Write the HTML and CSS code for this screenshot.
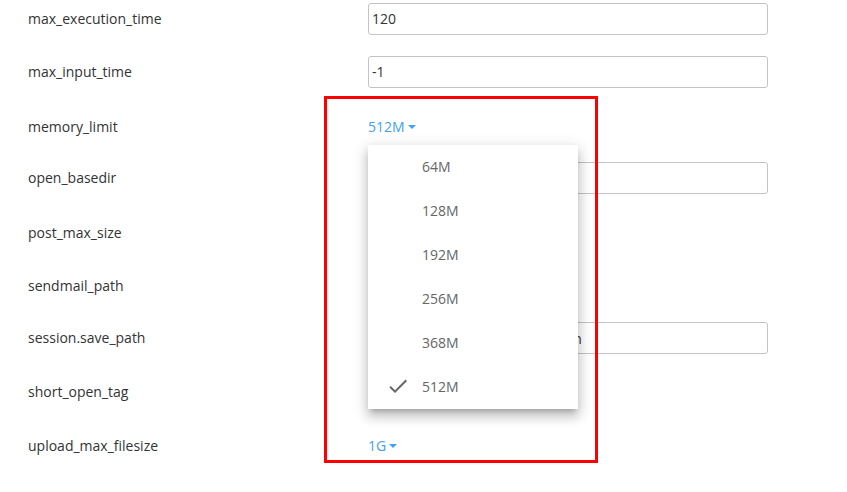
FILE: index.html
```html
<!DOCTYPE html>
<html lang="en">
  <head>
    <meta charset="UTF-8" />
    <title>PHP settings</title>
    <link rel="stylesheet" href="styles.css">
  </head>
  <body>
    <div class="settings">
      <div class="row">
        <label class="label">max_execution_time</label>
        <div class="value"><input class="text-input" type="text" value="120" /></div>
      </div>
      <div class="row">
        <label class="label">max_input_time</label>
        <div class="value"><input class="text-input" type="text" value="-1" /></div>
      </div>
      <div class="row row-select row-open">
        <label class="label">memory_limit</label>
        <div class="value">
          <span class="dropdown open">
            512M<span class="caret"></span>
            <ul class="menu">
              <li class="menu-item">64M</li>
              <li class="menu-item">128M</li>
              <li class="menu-item">192M</li>
              <li class="menu-item">256M</li>
              <li class="menu-item">368M</li>
              <li class="menu-item selected">
                <svg class="check" width="24" height="24" viewBox="0 0 24 24">
                  <path d="M9 16.17L4.83 12l-1.42 1.41L9 19 21 7l-1.41-1.41z" fill="#666666"></path>
                </svg>
                512M
              </li>
            </ul>
          </span>
        </div>
      </div>
      <div class="row">
        <label class="label">open_basedir</label>
        <div class="value"><input class="text-input" type="text" value="" /></div>
      </div>
      <div class="row row-select">
        <label class="label">post_max_size</label>
        <div class="value"><span class="dropdown">512M<span class="caret"></span></span></div>
      </div>
      <div class="row row-select">
        <label class="label">sendmail_path</label>
        <div class="value"><span class="dropdown">On<span class="caret"></span></span></div>
      </div>
      <div class="row">
        <label class="label">session.save_path</label>
        <div class="value"><input class="text-input" type="text" value="/www/server/php/82/lib/session" /></div>
      </div>
      <div class="row row-select">
        <label class="label">short_open_tag</label>
        <div class="value"><span class="dropdown">On<span class="caret"></span></span></div>
      </div>
      <div class="row row-select">
        <label class="label">upload_max_filesize</label>
        <div class="value"><span class="dropdown">1G<span class="caret"></span></span></div>
      </div>
    </div>

    <!-- highlight box drawn over the screenshot -->
    <div class="highlight"></div>
  </body>
</html>
```

FILE: styles.css
```css
* {
  box-sizing: border-box;
}

body {
  margin: 0;
  padding: 0;
  background: #ffffff;
  font-family: "Open Sans", "Liberation Sans", sans-serif;
  font-size: 14px;
  color: #333333;
}

.settings {
  margin-top: -8px;
  padding-left: 28px;
}

.row {
  display: flex;
  align-items: center;
  height: 53.25px;
}
.row-select {
  padding-top: 2px;
}
.row-open {
  padding-top: 4px;
}

.label {
  width: 340px;
  flex-shrink: 0;
  line-height: 20px;
}

.value {
  flex: 0 0 400px;
}

.text-input {
  width: 400px;
  height: 32px;
  padding: 0 4px 0 3px;
  border: 1px solid #c4c4c4;
  border-radius: 3px;
  font-family: inherit;
  font-size: 14px;
  color: #333333;
  background: #ffffff;
  outline: none;
}

.dropdown {
  position: relative;
  display: inline-flex;
  align-items: center;
  line-height: 20px;
  color: #42a0f5;
  cursor: pointer;
}

.caret {
  margin-left: 3px;
  width: 0;
  height: 0;
  border-left: 4px solid transparent;
  border-right: 4px solid transparent;
  border-top: 4px solid #42a0f5;
}

.menu {
  display: none;
  position: absolute;
  top: 28px;
  left: 0;
  z-index: 10;
  width: 210px;
  margin: 0;
  padding: 0;
  list-style: none;
  background: #ffffff;
  box-shadow: 0 5px 5px -3px rgba(0, 0, 0, 0.2), 0 8px 10px 1px rgba(0, 0, 0, 0.14),
    0 3px 14px 2px rgba(0, 0, 0, 0.12);
}

.dropdown.open .menu {
  display: block;
}

.menu-item {
  position: relative;
  height: 44px;
  line-height: 44px;
  padding-left: 54px;
  color: #666666;
  cursor: pointer;
}

.check {
  position: absolute;
  left: 18px;
  top: 9px;
}

.highlight {
  position: absolute;
  left: 324px;
  top: 96px;
  width: 274px;
  height: 367px;
  border: 3px solid #ff0000;
  pointer-events: none;
  z-index: 20;
}
```
